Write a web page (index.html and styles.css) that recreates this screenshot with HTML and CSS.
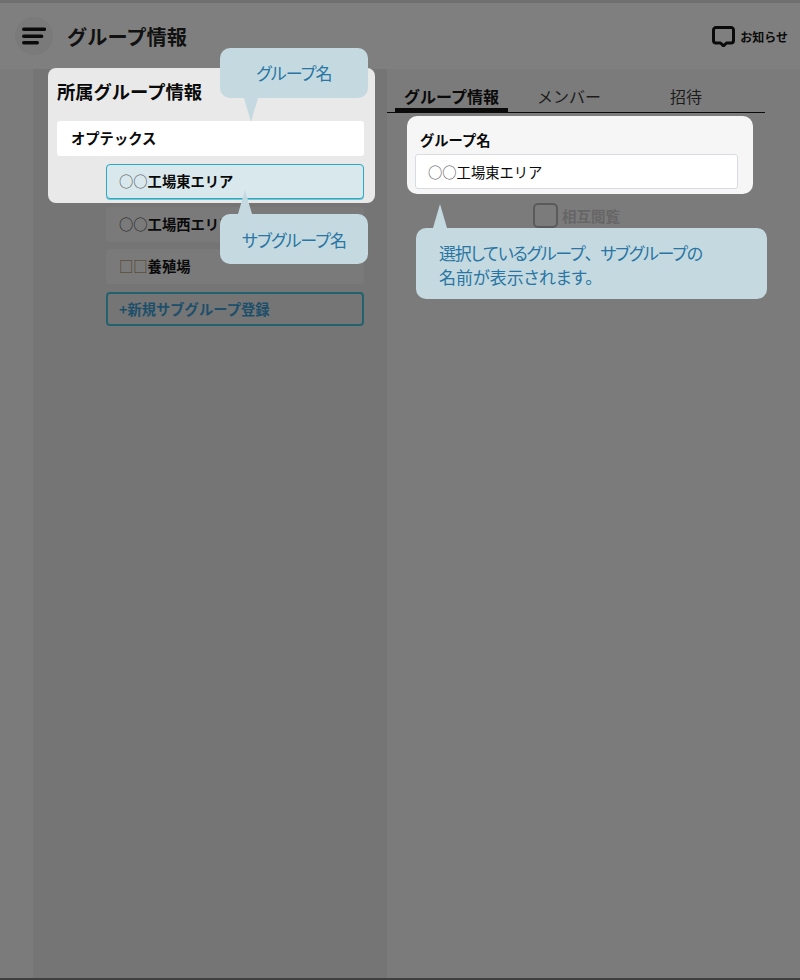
FILE: index.html
```html
<!DOCTYPE html>
<html lang="ja">
<head>
<meta charset="utf-8">
<title>グループ情報</title>
<link rel="stylesheet" href="styles.css">
</head>
<body>
<div class="app">
  <header class="header">
    <div class="menu-btn">
      <svg class="menu-icon" viewBox="0 0 24 18" width="24" height="18"><path d="M1.700 2.200h20.800M1.700 9.200h18M1.700 15.800h13.600" fill="none" stroke="#0a0a0a" stroke-width="3.400" stroke-linecap="round"/></svg>
    </div>
    <h1 class="page-title">グループ情報</h1>
    <div class="notice">
      <svg viewBox="0 0 23 21" width="23" height="21"><path d="M4 1.500h15A2.500 2.500 0 0 1 21.500 4v10.500A2.500 2.500 0 0 1 19 17h-4.500l-3 2.800-3-2.800H4a2.500 2.500 0 0 1-2.500-2.500V4A2.500 2.500 0 0 1 4 1.500z" fill="none" stroke="#0a0a0a" stroke-width="3" stroke-linejoin="round"/></svg>
      <span>お知らせ</span>
    </div>
  </header>
  <main class="main">
    <aside class="side">
      <div class="side-card">
        <h2 class="side-title">所属グループ情報</h2>
        <div class="org-row">オプテックス</div>
        <div class="sub-row sub-selected"><span class="thin">○○</span>工場東エリア</div>
      </div>
      <div class="sub-row sub-dim"><span class="thin">○○</span>工場西エリア</div>
      <div class="sub-row sub-dim"><span class="thin thin-square">□□</span>養殖場</div>
      <div class="sub-row sub-new">+新規サブグループ登録</div>
    </aside>
    <section class="content">
      <nav class="tabs">
        <div class="tab tab-active">グループ情報</div>
        <div class="tab tab-member">メンバー</div>
        <div class="tab tab-invite">招待</div>
      </nav>
      <div class="name-card">
        <div class="name-label">グループ名</div>
        <div class="name-input"><span class="thin">○○</span>工場東エリア</div>
      </div>
      <div class="mutual">
        <span class="check"></span>
        <span class="mutual-label">相互閲覧</span>
      </div>
    </section>
  </main>
  <div class="callout callout-group">グループ名</div>
  <div class="callout callout-sub">サブグループ名</div>
  <div class="callout callout-desc"><span class="tight">選択しているグループ<span class="comma">、</span>サブグループの</span><br>名前が表示されます。</div>
</div>
</body>
</html>
```
FILE: styles.css
```css
* { box-sizing: border-box; }
html, body { margin: 0; padding: 0; }
body {
  font-family: "Noto Sans CJK JP", "Liberation Sans", sans-serif;
  background: #7f7f7f;
  color: #0a0a0a;
}
.app {
  position: relative;
  width: 800px;
  height: 980px;
  display: flex;
  flex-direction: column;
  border-top: 3px solid #6f6f6f;
  border-bottom: 2px solid #3f3f3f;
  overflow: hidden;
}
.header {
  height: 66px;
  flex: none;
  display: flex;
  align-items: center;
  padding: 0 12px 0 15px;
  background: #7f7f7f;
}
.menu-btn {
  width: 38px;
  height: 38px;
  border-radius: 50%;
  background: #7a7a7a;
  display: flex;
  align-items: center;
  justify-content: center;
}
.page-title {
  margin: 2px 0 0 14px;
  font-size: 20.2px;
  font-weight: 700;
  line-height: 1;
  flex: 1;
  color: #111;
}
.notice {
  display: flex;
  align-items: center;
  gap: 5px;
  font-size: 12px;
  font-weight: 700;
}
.main {
  flex: 1;
  display: flex;
  padding-left: 33px;
  background: #7b7b7b;
}
.side {
  width: 354px;
  flex: none;
  background: #757575;
  display: flex;
  flex-direction: column;
  align-items: flex-end;
  padding-right: 23px;
}
.side-card {
  width: 327px;
  height: 135px;
  margin: -1px -11px 0 0;
  padding: 11px 11px 0 9px;
  background: #e9e9e9;
  border-radius: 8px;
  display: flex;
  flex-direction: column;
  align-items: flex-end;
}
.side-title {
  align-self: flex-start;
  margin: 0;
  height: 42px;
  font-size: 18.3px;
  line-height: 24px;
  font-weight: 700;
}
.org-row {
  width: 100%;
  height: 35px;
  padding-left: 14px;
  background: #fff;
  border-radius: 3px;
  font-size: 14.3px;
  font-weight: 700;
  line-height: 33px;
}
.sub-row {
  width: 258px;
  height: 35px;
  flex: none;
  padding-left: 12px;
  border-radius: 4px;
  font-size: 14.3px;
  font-weight: 700;
  line-height: 31px;
}
.thin { font-weight: 400; color: #222; }
.thin-square { color: #4e3a22; }
.sub-selected {
  margin-top: 8px;
  background: #d8e8ec;
  border: 1px solid #2aa9c4;
  box-shadow: 0 1px 0 #74c4d4;
}
.sub-selected .thin { color: #555; }
.sub-dim {
  margin-top: 7px;
  line-height: 34px;
  background: #7a7a7a;
  padding-left: 13px;
}
.side > .side-card + .sub-dim { margin-top: 4px; }
.sub-new {
  margin-top: 8px;
  height: 34px;
  border: 2px solid #23636f;
  color: #1d4f6b;
  padding-left: 11px;
  line-height: 29px;
}
.content {
  flex: 1;
  display: flex;
  flex-direction: column;
}
.tabs {
  width: 378px;
  height: 44px;
  display: flex;
  align-items: flex-end;
  border-bottom: 1px solid #0a0a0a;
  font-size: 16px;
  padding-left: 8px;
}
.tab {
  height: 26px;
  line-height: 20px;
  text-align: center;
}
.tab-active {
  width: 113px;
  font-weight: 700;
  border-bottom: 4px solid #0a0a0a;
}
.tab-member { width: 122px; color: #1b1b1b; }
.tab-invite { width: 112px; color: #1b1b1b; }
.name-card {
  width: 346px;
  height: 78px;
  margin: 3px 0 0 20px;
  padding: 15px 15px 0 8px;
  background: #f6f6f6;
  border-radius: 10px;
}
.name-label {
  padding-left: 5px;
  height: 23px;
  font-size: 14.3px;
  font-weight: 700;
  line-height: 18px;
}
.name-input {
  height: 35px;
  padding-left: 12px;
  background: #fff;
  border: 1px solid #d9dbe2;
  border-radius: 3px;
  font-size: 14.3px;
  line-height: 33px;
}
.name-input .thin { color: #555; }
.mutual {
  display: flex;
  align-items: center;
  gap: 4px;
  margin: 9px 0 0 146px;
}
.check {
  width: 25px;
  height: 25px;
  border: 2px solid #5a5a5a;
  border-radius: 5px;
}
.mutual-label {
  font-size: 14.5px;
  font-weight: 700;
  color: #666;
}
.callout {
  position: absolute;
  background: #c4dae0;
  color: #2a75a3;
  border-radius: 10px;
  font-size: 17px;
  font-feature-settings: "palt";
}
.callout::after {
  content: "";
  position: absolute;
  border-left: 7px solid transparent;
  border-right: 7px solid transparent;
}
.callout-group {
  left: 220px;
  top: 45px;
  width: 148px;
  height: 50px;
  line-height: 50px;
  text-align: center;
  letter-spacing: -0.9px;
}
.callout-group::after {
  left: 24px;
  top: 50px;
  border-top: 24px solid #c4dae0;
}
.callout-sub {
  left: 220px;
  top: 211px;
  width: 148px;
  height: 50px;
  line-height: 52px;
  text-align: center;
  letter-spacing: -0.9px;
}
.callout-sub::after {
  left: 18px;
  top: -24px;
  border-bottom: 24px solid #c4dae0;
}
.callout-desc {
  left: 416px;
  top: 225px;
  width: 351px;
  height: 71px;
  padding: 13px 23px;
  line-height: 24px;
}
.tight { letter-spacing: -1.2px; }
.comma { font-feature-settings: normal; }
.callout-desc::after {
  left: 17px;
  top: -24px;
  border-bottom: 24px solid #c4dae0;
}
```
